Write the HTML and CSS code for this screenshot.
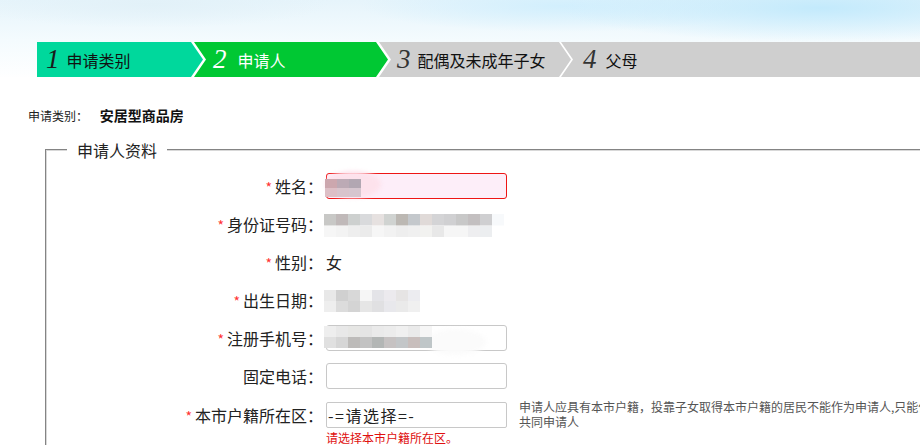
FILE: index.html
```html
<!DOCTYPE html>
<html lang="zh-CN">
<head>
    <meta charset="UTF-8">
    <title>安居型商品房申请 - 申请人</title>
    <link rel="stylesheet" href="styles.css">
</head>
<body>
    <div class="page">
        <div class="top">
            <div class="steps">
                <div class="step step-done"><i>1</i><span>申请类别</span></div>
                <div class="step step-on"><i>2</i><span>申请人</span></div>
                <div class="step"><i>3</i><span>配偶及未成年子女</span></div>
                <div class="step step-last"><i>4</i><span>父母</span></div>
            </div>
        </div>

        <div class="category">
            <span class="category-label">申请类别：</span>
            <b>安居型商品房</b>
        </div>

        <fieldset class="box">
            <legend>申请人资料</legend>

            <div class="row">
                <label class="row-label"><em>*</em>姓名：</label>
                <div class="field">
                    <div class="masked">
                        <input class="text text-error" type="text">
                        <div class="smear smear-pink"></div>
                        <div class="mosaic mosaic-name"></div>
                    </div>
                </div>
            </div>

            <div class="row">
                <label class="row-label"><em>*</em>身份证号码：</label>
                <div class="field">
                    <div class="mosaic mosaic-id"></div>
                </div>
            </div>

            <div class="row">
                <label class="row-label"><em>*</em>性别：</label>
                <div class="field value">女</div>
            </div>

            <div class="row">
                <label class="row-label"><em>*</em>出生日期：</label>
                <div class="field">
                    <div class="mosaic mosaic-birth"></div>
                </div>
            </div>

            <div class="row">
                <label class="row-label"><em>*</em>注册手机号：</label>
                <div class="field">
                    <div class="masked">
                        <input class="text" type="text">
                        <div class="smear smear-white"></div>
                        <div class="mosaic mosaic-phone"></div>
                    </div>
                </div>
            </div>

            <div class="row">
                <label class="row-label">固定电话：</label>
                <div class="field">
                    <input class="text" type="text">
                </div>
            </div>

            <div class="row row-top">
                <label class="row-label"><em>*</em>本市户籍所在区：</label>
                <div class="field field-col">
                    <select class="text picker">
                        <option>-=请选择=-</option>
                    </select>
                    <div class="error">请选择本市户籍所在区。</div>
                </div>
                <div class="hint">申请人应具有本市户籍，投靠子女取得本市户籍的居民不能作为申请人,只能作为共同申请人</div>
            </div>
        </fieldset>
    </div>
</body>
</html>
```

FILE: styles.css
```css
html, body {
    margin: 0;
    padding: 0;
    background: #fff;
    overflow: hidden;
}

body {
    font-family: "Noto Sans CJK SC", "Noto Sans", sans-serif;
    color: #222;
}

.page {
    width: 1200px;
}

/* sky header + step bar */
.top {
    padding-top: 42px;
    background:
        radial-gradient(ellipse 260px 34px at 820px 8px, #c3eafc, rgba(195, 234, 252, 0)),
        radial-gradient(ellipse 200px 26px at 560px 6px, #d2effd, rgba(210, 239, 253, 0)),
        radial-gradient(ellipse 180px 24px at 150px 4px, #e2f1f8, rgba(226, 241, 248, 0)),
        linear-gradient(#e6f4fb, #f4fbfe 40px, #ffffff 80px);
}

.steps {
    display: flex;
    margin-left: 37px;
    height: 35px;
    background: #fff;
}

.step {
    display: flex;
    align-items: center;
    width: 192px;
    margin-left: -9px;
    padding-left: 18px;
    box-sizing: border-box;
    background: #cfcfcf;
    color: #111;
    font-size: 16px;
    clip-path: polygon(0 0, calc(100% - 12px) 0, 100% 50%, calc(100% - 12px) 100%, 0 100%, 12px 50%);
}

.step i {
    font-family: "Liberation Serif", "DejaVu Serif", serif;
    font-size: 27px;
    color: #333;
    margin-right: 7px;
    line-height: 1;
}

.step-done {
    width: 166px;
    margin-left: 0;
    padding-left: 9px;
    background: #00d89c;
    clip-path: polygon(0 0, calc(100% - 12px) 0, 100% 50%, calc(100% - 12px) 100%, 0 100%);
}

.step-done i {
    color: #1a1a1a;
}

.step-on {
    width: 194px;
    padding-left: 19px;
    background: #00c833;
    color: #fff;
}

.step-on i {
    color: #fff;
    margin-right: 11px;
}

.step-last {
    width: 600px;
    margin-left: -10px;
    padding-left: 22px;
    clip-path: polygon(0 0, 100% 0, 100% 100%, 0 100%, 12px 50%);
}

.step-last i {
    margin-right: 9px;
}

/* category */
.category {
    margin: 30px 0 0 28px;
    font-size: 12px;
    line-height: 16px;
    color: #222;
}

.category-label {
    margin-right: 9px;
}

.category b {
    font-size: 14px;
    color: #111;
}

/* fieldset */
.box {
    margin: 15px 0 0 45px;
    padding: 6px 0 0;
    width: 1100px;
    border: 2px groove #d8d8d8;
    border-bottom: none;
    border-right: none;
}

.box legend {
    margin-left: 20px;
    padding: 0 10px;
    font-size: 16px;
    line-height: 22px;
    color: #222;
}

.row {
    display: flex;
    align-items: center;
    height: 38px;
}

.row-top {
    align-items: flex-start;
    height: auto;
    padding-top: 7px;
}

.row-label {
    width: 276px;
    margin-right: 3px;
    text-align: right;
    font-size: 16px;
    line-height: 20px;
}

.row-top .row-label {
    margin-top: 3px;
}

.row-label em {
    font-style: normal;
    color: #f33;
    font-size: 14px;
    margin-right: 3px;
}

.field {
    width: 181px;
}

.value {
    font-size: 16px;
    line-height: 20px;
}

.text {
    display: block;
    width: 181px;
    height: 26px;
    box-sizing: border-box;
    margin: 0;
    padding: 0 4px;
    border: 1px solid #c8c8c8;
    border-radius: 3px;
    background: #fff;
    font-family: inherit;
    font-size: 16px;
}

.text-error {
    border-color: #ee1515;
    background: #fdeef9;
}

.picker {
    appearance: none;
    padding: 0 0 0 1px;
    border-radius: 2px;
    color: #222;
    letter-spacing: 1.5px;
}

.error {
    margin-top: 2px;
    font-size: 12px;
    line-height: 15px;
    color: #e01010;
}

.hint {
    width: 432px;
    margin: -3px 0 0 12px;
    font-size: 12px;
    line-height: 15px;
    color: #555;
}

/* masked personal data */
.masked {
    position: relative;
}

.smear {
    position: absolute;
    border-radius: 50%;
    filter: blur(2px);
}

.smear-pink {
    left: -1px;
    top: -2px;
    width: 56px;
    height: 27px;
    background: #fde2ec;
}

.smear-white {
    left: 100px;
    top: 4px;
    width: 60px;
    height: 26px;
    background: #fbfbfb;
}

.mosaic {
    position: relative;
    height: 22px;
    background-repeat: no-repeat;
    background-size: 100% 50%;
    background-position: top, bottom;
}

.masked .mosaic {
    position: absolute;
}

.mosaic-name {
    left: -1px;
    top: 6px;
    width: 36px;
    height: 18px;
    background-image:
        linear-gradient(to right, #cca7ae 0 12px, #bcaab5 12px 24px, #b2a7b2 24px 36px),
        linear-gradient(to right, #ddbfc6 0 12px, #d8c4cc 12px 24px, #d6c6cf 24px 36px);
}

.mosaic-id {
    left: -2px;
    width: 180px;
    height: 23px;
    margin-top: 3px;
    background-image:
        linear-gradient(to right, #c8c8c6 0 12px, #c0b9b9 12px 24px, #cdd0cf 24px 36px, #d9dadc 36px 48px, #e6e1e0 48px 60px, #d0d3d1 60px 72px, #bcb8b3 72px 84px, #c4c8cc 84px 96px, #e0dad8 96px 108px, #d4d4d6 108px 120px, #d0d0d2 120px 132px, #c8c8c8 132px 144px, #c3bfc0 144px 156px, #cfcfd1 156px 168px, #f7f9fb 168px 180px),
        linear-gradient(to right, #f6f6f6 0 12px, #f3f3f3 12px 24px, #eeeeee 24px 36px, #ebebeb 36px 48px, #f6f6f6 48px 60px, #f2f2f2 60px 72px, #eeeeee 72px 84px, #f0f0f0 84px 96px, #f2f2f0 96px 108px, #e8e8e8 108px 120px, #f6f6f6 120px 132px, #f6f6f6 132px 144px, #eeeef0 144px 156px, #eceef0 156px 168px, #ffffff 168px 180px);
}

.mosaic-birth {
    left: -2px;
    width: 96px;
    height: 22px;
    margin-top: 2px;
    background-image:
        linear-gradient(to right, #e8e8e8 0 12px, #d0d0d0 12px 24px, #d8d8d8 24px 36px, #f6f6f6 36px 48px, #e4e4e8 48px 60px, #eceaee 60px 72px, #e6e4e4 72px 84px, #ececf0 84px 96px),
        linear-gradient(to right, #eeeeee 0 12px, #dcdcdc 12px 24px, #d4d4d4 24px 36px, #e6e6e6 36px 48px, #e0e0e2 48px 60px, #e8e8ec 60px 72px, #eaeaea 72px 84px, #f0f0f0 84px 96px);
}

.mosaic-phone {
    left: -2px;
    top: 1px;
    width: 108px;
    height: 22px;
    background-image:
        linear-gradient(to right, #eeeeee 0 12px, #e8e8e8 12px 24px, #e6e6e4 24px 36px, #e4e4e4 36px 48px, #eaeaea 48px 60px, #ececec 60px 72px, #f0f0f0 72px 84px, #eaeaea 84px 96px, #f6f6f6 96px 108px),
        linear-gradient(to right, #e0e0e0 0 12px, #d6d6d6 12px 24px, #bdbbb9 24px 36px, #c2c2c2 36px 48px, #b3b6b5 48px 60px, #c6c2c2 60px 72px, #c3c6c8 72px 84px, #c8bebc 84px 96px, #bfc6c8 96px 108px);
}
```
